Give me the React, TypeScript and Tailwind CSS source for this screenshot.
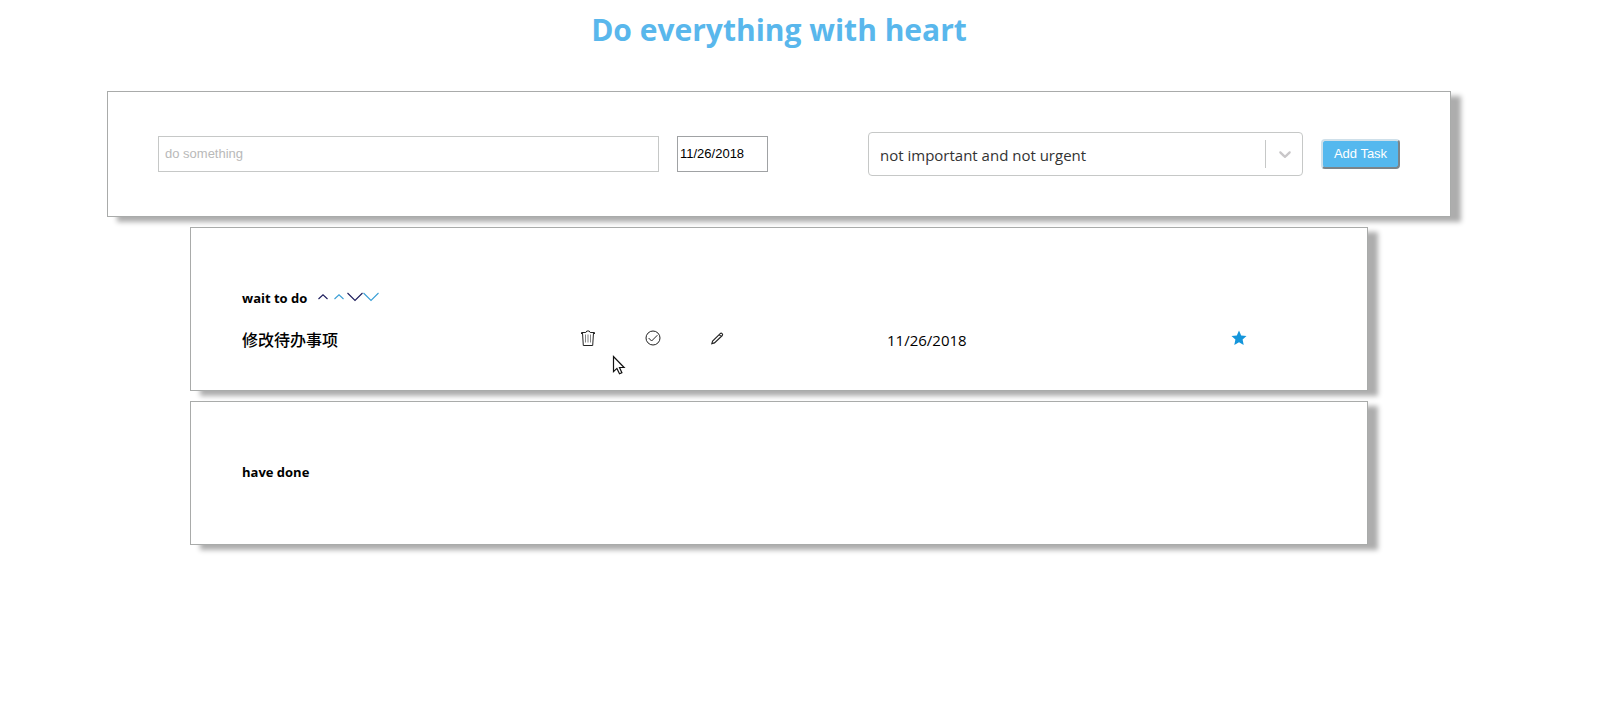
import React from "react";

const panel = "border border-[#a9abaa] bg-white shadow-[10px_5px_5px_#adadad]";

type CaretProps = { up?: boolean; color: string; label: string };

function SortButton({ up, color, label }: CaretProps) {
  return (
    <button type="button" aria-label={label} className="flex h-4 w-4 items-center justify-center">
      <svg width="16" height="16" viewBox="0 0 16 16" fill="none" stroke={color} strokeWidth="1.1">
        <path d={up ? "M3.5 11 8 6.8l4.5 4.2" : "M.5 5 8 12.5 15.5 5"} />
      </svg>
    </button>
  );
}

function TrashIcon() {
  return (
    <svg width="16" height="16" viewBox="0 0 16 16" fill="none" stroke="#222" strokeWidth="1">
      <path d="M1.5 4V2.5h4.3L6.8 1h2.4l1 1.5h4.3V4M2.5 2.8l.8 12.7h9.4l.8-12.7" />
      <path stroke="#666" d="M5.5 4.5v8M8 4.5v8M10.5 4.5v8" strokeWidth=".8" />
    </svg>
  );
}

function CheckIcon() {
  return (
    <svg width="16" height="16" viewBox="0 0 16 16" fill="none" stroke="#222" strokeWidth="1">
      <circle cx="8" cy="8" r="7" />
      <path d="m3.6 8 3 3 5.8-5.8" />
    </svg>
  );
}

function PencilIcon() {
  return (
    <svg width="16" height="16" viewBox="0 0 16 16" fill="none" stroke="#222" strokeWidth="1.1">
      <path d="M1.8 13.6 2.6 11l7.6-7.4c1.2-1.2 3.2.6 2.1 1.9l-7.8 7.4zM9.2 4.6l2 2" />
    </svg>
  );
}

function StarIcon() {
  return (
    <svg width="16" height="16" viewBox="0 0 16 16" fill="#1596db">
      <path d="m8 .5 2.2 4.9 5.3.6-3.9 3.6 1.1 5.4L8 12.3 3.3 15l1.1-5.4L.5 6l5.3-.6z" />
    </svg>
  );
}

function Pointer() {
  return (
    <svg
      className="absolute top-[355px] left-[612px]"
      width="14"
      height="21"
      viewBox="0 0 14 21"
      fill="#fff"
      stroke="#111"
      strokeWidth="1.2"
      aria-hidden="true"
    >
      <path d="M1.5 1.5v15.2l3.4-3.3 2.6 5.4 2.4-1.1-2.4-5.2h4.6z" />
    </svg>
  );
}

export default function App() {
  return (
    <div className="relative min-h-screen bg-white pr-[150px] pl-[107px] font-['Open_Sans','Noto_Sans_CJK_SC',sans-serif] text-black">
      <h1 className="pt-2 text-center text-[30px] leading-[43px] font-bold text-[#59b7ec]">Do everything with heart</h1>

      <form
        className={`${panel} mt-10 flex h-[126px] items-center px-[50px]`}
        onSubmit={(e) => e.preventDefault()}
      >
        <div className="flex min-w-0 flex-[501]">
          <input
            aria-label="Task"
            placeholder="do something"
            className="h-9 w-full border border-[#c6c8c7] px-1.5 pb-0.5 font-['Liberation_Sans',sans-serif] text-[13px] placeholder:text-[#b9b9b9]"
          />
        </div>
        <input
          aria-label="Date"
          defaultValue="11/26/2018"
          className="ml-[18px] h-9 w-[91px] border border-[#a0a2a4] px-0.5 pb-0.5 font-['Liberation_Sans',sans-serif] text-[13px]"
        />
        <div className="relative ml-[100px] min-w-0 flex-[435]">
          <select
            aria-label="Priority"
            className="h-11 w-full appearance-none rounded border border-[#c6c8c7] bg-white px-[11px] pt-0.5 text-[15px] text-[#333]"
          >
            <option>not important and not urgent</option>
          </select>
          <div className="pointer-events-none absolute inset-y-2 right-0 flex w-[38px] items-center justify-center border-l border-[#c6c8c7]">
            <svg width="20" height="20" viewBox="0 0 20 20" fill="#c9c7c9">
              <path d="M4.516 7.548c.436-.446 1.043-.481 1.576 0L10 11.295l3.908-3.747c.533-.481 1.141-.446 1.574 0 .436.445.408 1.197 0 1.615-.406.418-4.695 4.502-4.695 4.502a1.095 1.095 0 0 1-1.576 0S4.924 9.581 4.516 9.163s-.436-1.17 0-1.615z" />
            </svg>
          </div>
        </div>
        <button
          type="submit"
          className="ml-[18px] h-[30px] w-[79px] rounded border-2 border-t-[#cfe0ea] border-r-[#7b8489] border-b-[#7b8489] border-l-[#cfe0ea] bg-[#54b8ee] pb-0.5 font-['Liberation_Sans',sans-serif] text-[13px] leading-none text-white"
        >
          Add Task
        </button>
      </form>

      <main className="mt-[10px] flex flex-col gap-[10px] px-[83px]">
        <section className={`${panel} h-[164px] px-[51px] pt-[60px]`}>
          <div className="flex items-start">
            <h2 className="mr-2 text-[13px] leading-5 font-bold">wait to do</h2>
            <SortButton up color="#1c1c5c" label="Sort by date, ascending" />
            <SortButton up color="#3a9fd6" label="Sort by priority, ascending" />
            <SortButton color="#1c1c5c" label="Sort by date, descending" />
            <SortButton color="#3a9fd6" label="Sort by priority, descending" />
          </div>
          <div className="mt-5 flex h-6 items-start">
            <span className="w-[338px] text-base leading-6 font-medium">修改待办事项</span>
            <div className="flex w-[307px] gap-[49px] pt-0.5">
              <button type="button" aria-label="Delete"><TrashIcon /></button>
              <button type="button" aria-label="Complete"><CheckIcon /></button>
              <button type="button" aria-label="Edit"><PencilIcon /></button>
            </div>
            <span className="text-[15px] leading-6">11/26/2018</span>
            <span className="mr-[69px] ml-auto pt-0.5"><StarIcon /></span>
          </div>
        </section>
        <section className={`${panel} h-[144px] px-[51px] pt-[60px]`}>
          <h2 className="text-[13px] leading-5 font-bold">have done</h2>
        </section>
      </main>

      <Pointer />
    </div>
  );
}
